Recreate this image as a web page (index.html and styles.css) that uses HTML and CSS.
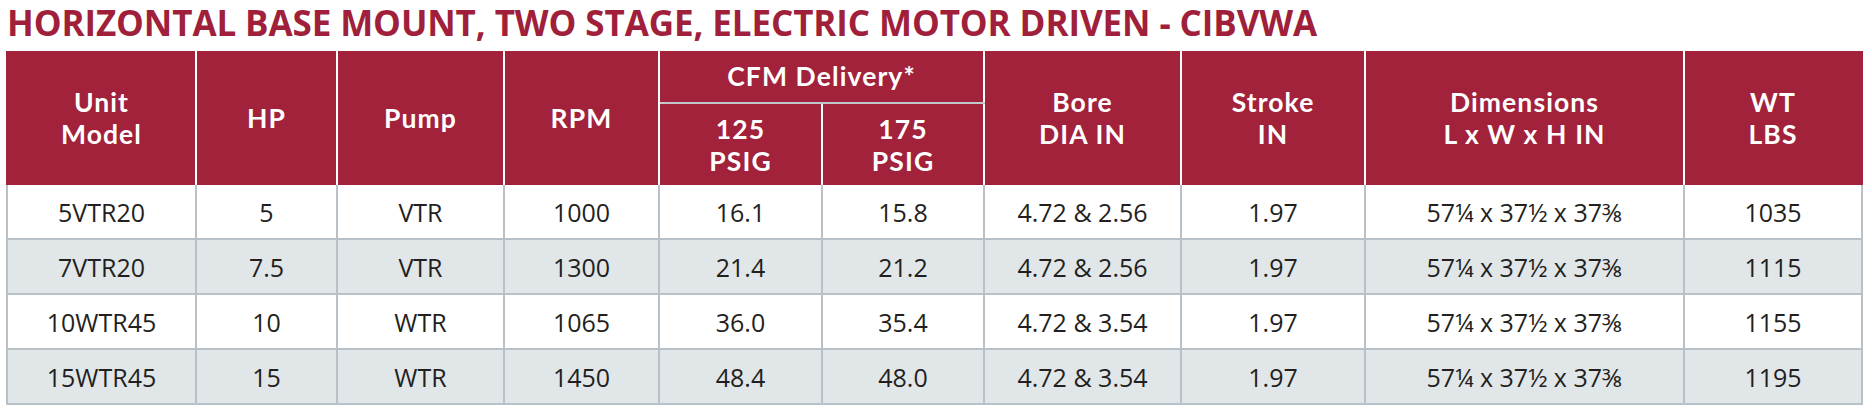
FILE: index.html
```html
<!DOCTYPE html>
<html lang="en">
<head>
<meta charset="utf-8">
<title>Horizontal Base Mount, Two Stage, Electric Motor Driven - CIBVWA</title>
<link rel="stylesheet" href="styles.css">
</head>
<body>
<div class="page">
  <h1 class="title">HORIZONTAL BASE MOUNT, TWO STAGE, ELECTRIC MOTOR DRIVEN - CIBVWA</h1>
  <table class="spec">
    <colgroup>
      <col class="c-model">
      <col class="c-hp">
      <col class="c-pump">
      <col class="c-rpm">
      <col class="c-cfm">
      <col class="c-cfm2">
      <col class="c-bore">
      <col class="c-stroke">
      <col class="c-dim">
      <col class="c-wt">
    </colgroup>
    <thead>
      <tr class="h-top">
        <th rowspan="2">Unit<br>Model</th>
        <th rowspan="2">HP</th>
        <th rowspan="2">Pump</th>
        <th rowspan="2">RPM</th>
        <th colspan="2" class="group">CFM Delivery*</th>
        <th rowspan="2">Bore<br>DIA IN</th>
        <th rowspan="2">Stroke<br>IN</th>
        <th rowspan="2">Dimensions<br>L x W x H IN</th>
        <th rowspan="2" class="last">WT<br>LBS</th>
      </tr>
      <tr class="h-sub">
        <th>125<br>PSIG</th>
        <th>175<br>PSIG</th>
      </tr>
    </thead>
    <tbody>
      <tr>
        <td>5VTR20</td><td>5</td><td>VTR</td><td>1000</td><td>16.1</td><td>15.8</td><td>4.72 &amp; 2.56</td><td>1.97</td><td>57¼ x 37½ x 37⅜</td><td>1035</td>
      </tr>
      <tr class="alt">
        <td>7VTR20</td><td>7.5</td><td>VTR</td><td>1300</td><td>21.4</td><td>21.2</td><td>4.72 &amp; 2.56</td><td>1.97</td><td>57¼ x 37½ x 37⅜</td><td>1115</td>
      </tr>
      <tr>
        <td>10WTR45</td><td>10</td><td>WTR</td><td>1065</td><td>36.0</td><td>35.4</td><td>4.72 &amp; 3.54</td><td>1.97</td><td>57¼ x 37½ x 37⅜</td><td>1155</td>
      </tr>
      <tr class="alt">
        <td>15WTR45</td><td>15</td><td>WTR</td><td>1450</td><td>48.4</td><td>48.0</td><td>4.72 &amp; 3.54</td><td>1.97</td><td>57¼ x 37½ x 37⅜</td><td>1195</td>
      </tr>
    </tbody>
  </table>
</div>
</body>
</html>
```

FILE: styles.css
```css
html, body {
  margin: 0;
  padding: 0;
  background: #ffffff;
}

.page {
  padding: 2px 0 0 6px;
  font-family: "Open Sans", "Noto Sans", "DejaVu Sans", sans-serif;
}

.title {
  margin: 0 0 7px 1px;
  font-size: 35px;
  line-height: 42px;
  font-weight: 700;
  color: #a01f3a;
  letter-spacing: -0.1px;
  white-space: nowrap;
}

.spec {
  width: 1855px;
  table-layout: fixed;
  border-collapse: collapse;
}

.c-model { width: 189px; }
.c-hp { width: 141px; }
.c-pump { width: 167px; }
.c-rpm { width: 155px; }
.c-cfm { width: 163px; }
.c-cfm2 { width: 162px; }
.c-bore { width: 197px; }
.c-stroke { width: 184px; }
.c-dim { width: 319px; }
.c-wt { width: 178px; }

.spec th {
  background: #a2213b;
  color: #ffffff;
  font-family: "Lato", "Open Sans", sans-serif;
  font-weight: 700;
  font-size: 26.5px;
  line-height: 32px;
  letter-spacing: 1.1px;
  padding: 0;
  text-align: center;
  vertical-align: middle;
  border-left: 2px solid #ffffff;
  border-right: 2px solid #ffffff;
  border-top: 0;
  border-bottom: 0;
}

.spec .h-top th:first-child {
  border-left: 2px solid #a2213b;
}

.spec .h-top th.last {
  border-right: 2px solid #a2213b;
}

.spec .h-top {
  height: 52px;
}

.spec .h-sub {
  height: 82px;
}

.spec th.group {
  border-bottom: 2px solid #c3c8cd;
  padding-bottom: 2px;
}

.spec td {
  border: 2px solid #b9c1c8;
  border-top: 0;
  height: 53px;
  padding: 0;
  text-align: center;
  vertical-align: middle;
  font-size: 25px;
  line-height: 30px;
  color: #231f20;
  background: #ffffff;
}

.spec tbody tr:not(:first-child) td {
  border-top: 2px solid #b9c1c8;
}

.spec tr.alt td {
  background: #e1e6e9;
}
```
